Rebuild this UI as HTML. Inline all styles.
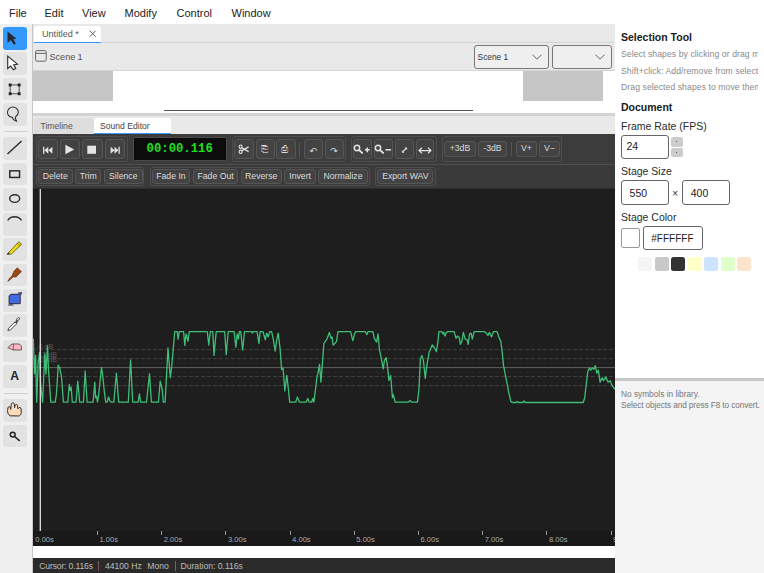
<!DOCTYPE html>
<html><head><meta charset="utf-8"><title>Untitled</title>
<style>
*{box-sizing:border-box;margin:0;padding:0}
html,body{width:764px;height:573px;overflow:hidden;background:#fff;font-family:"Liberation Sans",sans-serif;color:#222}
div,span{position:absolute;white-space:nowrap}
#menu{left:0;top:0;width:764px;height:24px;background:#fff}
#menu span{top:6px;font-size:11px;color:#222;line-height:14px}
#tools{left:0;top:24px;width:33px;height:549px;background:#f0f0f0;border-right:1px solid #c6c6c6}
.tb{left:3.3px;width:23.3px;height:22.8px;border-radius:3px;background:#e2e2e2}
.tb.sel{background:#3399ff}
.tb svg{position:absolute;left:0;top:0;width:23px;height:22.8px;overflow:visible}
.tsep{left:4px;width:23.5px;height:1px;background:#cfcfcf}
#tabbar{left:33px;top:24px;width:582px;height:18.5px;background:#e8e8e8;border-bottom:1px solid #d4d4d4}
#doctab{left:0.5px;top:1.5px;width:67px;height:17px;background:#fff;border-bottom:1.5px solid #3399ff;border-radius:3px 3px 0 0;font-size:9.1px;color:#555}
#scenebar{left:33px;top:42.5px;width:582px;height:28px;background:#e9e9e9;border-bottom:1px solid #d4d4d4}
.sel1{top:2.5px;height:23.5px;border:1px solid #777;border-radius:3px;background:#efefef;font-size:8.35px;color:#333;line-height:22.6px;padding-left:2.6px}
#stage{left:33px;top:70.5px;width:582px;height:42.5px;background:#fff}
#split1{left:33px;top:113px;width:582px;height:3.5px;background:#d2d2d2}
#tltabs{left:33px;top:116px;width:582px;height:18px;background:#e9e9e9}
.ttab{top:1.5px;height:16.5px;font-size:8.6px;line-height:16px;border-radius:3px 3px 0 0}
#se{left:33px;top:134px;width:582px;height:411.5px;background:#1e1e1e;overflow:hidden}
#tb1{left:0;top:0;width:582px;height:30.5px;background:#3c3c3c;border-bottom:1px solid #505050}
#tb2{left:0;top:30.5px;width:582px;height:24px;background:#3a3a3a;border-bottom:1px solid #2c2c2c}
.grp{border:1px solid #4e4e4e;border-radius:3px}
.btn{border:1px solid #565656;border-radius:3px;background:#434343;color:#ddd;font-size:8.7px;text-align:center}
.btn svg{position:absolute;left:50%;top:50%;margin:-10px 0 0 -10px;width:20px;height:20px;overflow:visible}
.btn b{font-family:"DejaVu Sans",sans-serif;font-weight:normal;position:relative;top:1px}
#ruler{left:0;top:397px;width:582px;height:14.5px;background:#191919}
#ruler span{top:4px;font-size:7.6px;color:#aaa;line-height:10px}
#ruler i{position:absolute;top:0;width:1px;height:3.5px;background:#9a9a9a}
#status{left:33px;top:557.5px;width:582px;height:15.5px;background:#2a2a2a;color:#bdbdbd;font-size:8.6px}
#status span{top:3px;line-height:10px}
#right{left:615px;top:24px;width:149px;height:549px;background:#fff;overflow:hidden}
#right .h{font-weight:bold;font-size:10.5px;color:#1a1a1a;left:6px;line-height:12px}
#right .d{letter-spacing:0.08px;font-size:8.65px;color:#8a8a8a;left:6px;line-height:10px;width:137px;overflow:hidden}
#right .l{font-size:10.5px;color:#2a2a2a;left:6px;line-height:12px}
.inp{border:1px solid #666;border-radius:3px;background:#fff;font-size:10.5px;color:#222}
.sw{top:233px;width:14.1px;height:14px;border-radius:2.5px}
#lib{left:0;top:354px;width:149px;height:195px;background:#f4f4f4;border-top:3.8px solid #c8c8c8}
#lib span{left:6px;font-size:8.4px;color:#777;line-height:10px}
svg text{font-family:"Liberation Sans",sans-serif}
</style></head><body>
<div id="menu">
<span style="left:9px">File</span><span style="left:44.5px">Edit</span><span style="left:82px">View</span><span style="left:124.5px">Modify</span><span style="left:176.5px">Control</span><span style="left:231.5px">Window</span>
</div>
<div id="tools">
<div class="tb sel" style="top:3.0px"><svg viewBox="0 0 23 22.8"><path d="M4.5 4.4V16L7.8 13L10.8 17.8L12.8 16.5L10.4 12.1L13.6 11.7Z" fill="#2b2b2b"/></svg></div>
<div class="tb" style="top:28.3px"><svg viewBox="0 0 23 22.8"><path d="M4.7 4.2V16.6L7.5 14.1L10.5 17.7L12.8 16.4L10.6 12.9L14.4 12.2Z" fill="#fff" stroke="#2a2a2a" stroke-width="1.1" stroke-linejoin="miter"/></svg></div>
<div class="tb" style="top:53.6px"><svg viewBox="0 0 23 22.8"><rect x="7.15" y="6.95" width="9" height="8.8" fill="none" stroke="#444" stroke-width="0.9"/><g fill="#222"><rect x="5.7" y="5.5" width="2.9" height="2.9"/><rect x="14.7" y="5.5" width="2.9" height="2.9"/><rect x="5.7" y="14.3" width="2.9" height="2.9"/><rect x="14.7" y="14.3" width="2.9" height="2.9"/></g></svg></div>
<div class="tb" style="top:78.9px"><svg viewBox="0 0 23 22.8"><path d="M9.2 14.3C6.3 13.9 4.5 11.8 4.5 9.3C4.5 6.3 6.9 4 9.9 4C12.9 4 15.3 6.3 15.3 9.2C15.3 10.9 14.4 12.4 13 13.3L12.2 15.3L13.7 18.2L10.4 16.6Z" fill="none" stroke="#2a2a2a" stroke-width="1.05" stroke-linejoin="round"/></svg></div>
<div class="tb" style="top:113.2px"><svg viewBox="0 0 23 22.8"><path d="M4.5 17L18.6 4.1" stroke="#2a2a2a" stroke-width="1.4" fill="none"/></svg></div>
<div class="tb" style="top:138.5px"><svg viewBox="0 0 23 22.8"><rect x="6.75" y="7.85" width="9.8" height="6.6" fill="none" stroke="#2a2a2a" stroke-width="1.5"/></svg></div>
<div class="tb" style="top:163.8px"><svg viewBox="0 0 23 22.8"><ellipse cx="11.7" cy="10.6" rx="5" ry="3.8" fill="none" stroke="#2a2a2a" stroke-width="1.4"/></svg></div>
<div class="tb" style="top:189.1px"><svg viewBox="0 0 23 22.8"><path d="M4.7 7.3C8 2.5 15.2 2.5 18.5 7.3" fill="none" stroke="#2a2a2a" stroke-width="1.4"/></svg></div>
<div class="tb" style="top:214.4px"><svg viewBox="0 0 23 22.8"><path d="M4 16.2L15.8 3.8L18.7 6.2L8.1 16.2Z" fill="#f5d90a" stroke="#55500a" stroke-width="0.8" stroke-linejoin="round"/><path d="M14.3 5.4L17.1 7.8" stroke="#55500a" stroke-width="0.7"/><path d="M4 16.2L6 14.1L6.5 16.2Z" fill="#333"/></svg></div>
<div class="tb" style="top:239.7px"><svg viewBox="0 0 23 22.8"><path d="M14.2 3.8L18.4 7.5L13.1 12.9L10 12.9L7.6 15.2L4.8 17.4L6.6 14.3L9 12L10.8 7.6Z" fill="#9c4a12" stroke="#4a2408" stroke-width="0.6" stroke-linejoin="round"/></svg></div>
<div class="tb" style="top:265.0px"><svg viewBox="0 0 23 22.8"><path d="M7.6 5.3H15.8L17.2 6.7V14.7H6.1V6.8Z" fill="#4169e1" stroke="#2a2a3a" stroke-width="1" stroke-linejoin="round"/><path d="M15.3 3.9L18.7 3.6L17.6 6.3Z" fill="#4169e1" stroke="#2a2a3a" stroke-width="0.8" stroke-linejoin="round"/><ellipse cx="7.8" cy="15.9" rx="3" ry="0.7" fill="#2a3350"/></svg></div>
<div class="tb" style="top:290.3px"><svg viewBox="0 0 23 22.8"><path d="M4.9 16.4L5.6 14.2L12.2 7.9L13.9 9.6L7.3 16Z" fill="#fff" stroke="#333" stroke-width="0.9" stroke-linejoin="round"/><path d="M12.6 8.9L14.6 6.4" stroke="#333" stroke-width="1.8"/><ellipse cx="15.2" cy="5" rx="1.7" ry="1.1" transform="rotate(-42 15.2 5)" fill="#fff" stroke="#333" stroke-width="0.8"/></svg></div>
<div class="tb" style="top:315.6px"><svg viewBox="0 0 23 22.8"><path d="M4.8 7.7L9 4H16.3L18.4 6.1V10H10.4Z" fill="#ffb6c1" stroke="#444" stroke-width="0.8" stroke-linejoin="round"/><path d="M10.4 4V10" stroke="#444" stroke-width="0.7"/></svg></div>
<div class="tb" style="top:340.9px"><svg viewBox="0 0 23 22.8"><text x="11.5" y="15.5" font-size="12.1" font-weight="bold" fill="#20222c" text-anchor="middle">A</text></svg></div>
<div class="tb" style="top:375.2px"><svg viewBox="0 0 23 22.8"><path d="M7.3 16.8C5.3 15.8 4.4 13.8 4.6 11.3L5 8.8C5.3 7.3 7.3 7.3 7.5 8.8L7.7 10.3L8.3 5.5C8.6 3.2 11.2 3.2 11.4 5.5L11.6 8.6L12 6.6C12.3 5 14.5 5.2 14.6 6.8L14.9 9.8L15.4 9.3C16 8 18 8.3 18 9.8L18.3 13.5C18.3 15.3 17.3 16.5 15.8 17Z" fill="#ffdab9" stroke="#2a2a2a" stroke-width="1" stroke-linejoin="round"/><path d="M10.5 9L9.5 14L13 11Z" fill="#e6e6e6"/></svg></div>
<div class="tb" style="top:400.5px"><svg viewBox="0 0 23 22.8"><circle cx="9.7" cy="9.6" r="2.4" fill="none" stroke="#222" stroke-width="1.5"/><path d="M11.6 11.5L16.7 15.8" stroke="#222" stroke-width="1.6"/></svg></div>
<div class="tsep" style="top:107px"></div><div class="tsep" style="top:369px"></div>

</div>
<div id="tabbar"><div id="doctab"><span style="left:8.5px;top:3.5px;line-height:10px">Untitled *</span>
<svg style="position:absolute;left:55px;top:4.7px;width:7.4px;height:7.4px" viewBox="0 0 8 8"><path d="M0.7 0.7L7.3 7.3M7.3 0.7L0.7 7.3" stroke="#555" stroke-width="1" fill="none"/></svg></div></div>
<div id="scenebar">
<svg style="position:absolute;left:2px;top:7.5px;width:12px;height:12px" viewBox="0 0 12 12"><rect x="0.6" y="0.6" width="10.6" height="10.6" rx="1.5" fill="none" stroke="#666" stroke-width="1"/><path d="M0.6 3.4H11.2" stroke="#666" stroke-width="1"/></svg>
<span style="left:16.6px;top:8px;font-size:9.2px;letter-spacing:-0.1px;color:#555;line-height:12px">Scene 1</span>
<div class="sel1" style="left:441px;width:75px">Scene 1<svg style="position:absolute;left:57px;top:8px;width:10px;height:6px" viewBox="0 0 10 6"><path d="M0.5 0.7L5 5.2L9.5 0.7" stroke="#555" stroke-width="0.9" fill="none"/></svg></div>
<div class="sel1" style="left:519px;width:60px"><svg style="position:absolute;left:42px;top:8px;width:10px;height:6px" viewBox="0 0 10 6"><path d="M0.5 0.7L5 5.2L9.5 0.7" stroke="#555" stroke-width="0.9" fill="none"/></svg></div>
</div>
<div id="stage">
<div style="left:0;top:0;width:79.7px;height:30px;background:#c6c6c6"></div>
<div style="left:490px;top:0;width:79.8px;height:30px;background:#c6c6c6"></div>
<div style="left:130.5px;top:39px;width:309.5px;height:1px;background:#555"></div>
</div>
<div id="split1"></div>
<div id="tltabs">
<div class="ttab" style="left:0.5px;width:60px;background:#dedede;color:#555"><span style="left:7px;top:0">Timeline</span></div>
<div class="ttab" style="left:60.5px;width:77px;background:#fff;color:#444;border-bottom:1.5px solid #3399ff"><span style="left:6.5px;top:0">Sound Editor</span></div>
</div>
<div id="se">
<div id="tb1">
<div class="grp" style="left:2.6px;top:2.2px;width:92.0px;height:26.2px"></div>
<div class="btn" style="left:4.5px;top:4.8px;width:20.4px;height:20.6px;line-height:18.6px"><svg viewBox="0 0 20 20"><path d="M5.7 7.7V14.8" stroke="#e4e4e4" stroke-width="1.3"/><path d="M10.3 7.7L6.4 11.25L10.3 14.8ZM14.4 7.7L10.5 11.25L14.4 14.8Z" fill="#e4e4e4"/></svg></div>
<div class="btn" style="left:26.9px;top:4.8px;width:20.4px;height:20.6px;line-height:18.6px"><svg viewBox="0 0 20 20"><path d="M5.4 5.7L14.2 10.4L5.4 15.2Z" fill="#e4e4e4"/></svg></div>
<div class="btn" style="left:49.3px;top:4.8px;width:20.4px;height:20.6px;line-height:18.6px"><svg viewBox="0 0 20 20"><rect x="5.3" y="6.7" width="8.7" height="8.1" fill="#e4e4e4"/></svg></div>
<div class="btn" style="left:71.7px;top:4.8px;width:20.4px;height:20.6px;line-height:18.6px"><svg viewBox="0 0 20 20"><path d="M14.1 7.7V14.8" stroke="#e4e4e4" stroke-width="1.3"/><path d="M5.6 7.7L9.5 11.25L5.6 14.8ZM9.5 7.7L13.4 11.25L9.5 14.8Z" fill="#e4e4e4"/></svg></div>
<div style="left:100.0px;top:2.6px;width:93.5px;height:24.4px;border:1px solid #4a4a4a;border-radius:2px;background:#0c0c0c"><span style="left:12.6px;top:5px;font-family:'Liberation Mono',monospace;font-weight:bold;font-size:12.25px;line-height:13px;color:#1fe01f">00:00.116</span></div>
<div class="grp" style="left:199.3px;top:2.2px;width:113.3px;height:26.2px"></div>
<div class="btn" style="left:201.3px;top:4.8px;width:19.4px;height:20.6px;line-height:18.6px"><svg viewBox="0 0 20 20"><ellipse cx="6.6" cy="7.7" rx="1.5" ry="1.7" fill="none" stroke="#e4e4e4" stroke-width="1.1"/><ellipse cx="6.6" cy="12.8" rx="1.5" ry="1.7" fill="none" stroke="#e4e4e4" stroke-width="1.1"/><path d="M7.8 8.8L14.6 12.6M7.8 11.7L14.6 7.9" stroke="#e4e4e4" stroke-width="1.3" fill="none"/></svg></div>
<div class="btn" style="left:222.5px;top:4.8px;width:19.4px;height:20.6px;line-height:18.6px"><b style="top:-0.3px;left:-1px">⎘</b></div>
<div class="btn" style="left:243.4px;top:4.8px;width:19.4px;height:20.6px;line-height:18.6px"><b style="top:-0.2px;left:-1.4px;font-size:9.2px">⎙</b></div>
<div class="btn" style="left:270.5px;top:4.8px;width:19.4px;height:20.6px;line-height:18.6px"><b style="top:1.8px;font-size:9.2px">↶</b></div>
<div class="btn" style="left:291.5px;top:4.8px;width:19.4px;height:20.6px;line-height:18.6px"><b style="top:1.8px;font-size:9.2px">↷</b></div>
<div style="left:266.3px;top:7.6px;width:1px;height:15px;background:#555"></div>
<div class="grp" style="left:317.8px;top:2.2px;width:85.8px;height:26.2px"></div>
<div class="btn" style="left:320.1px;top:4.8px;width:18.8px;height:20.6px;line-height:18.6px"><svg viewBox="0 0 20 20"><circle cx="5" cy="9" r="2.65" fill="none" stroke="#e4e4e4" stroke-width="1.5"/><path d="M7.1 11.1L10.2 13.9" stroke="#e4e4e4" stroke-width="1.9" stroke-linecap="round"/><path d="M12.9 10.8H17.7M15.3 8.4V13.2" stroke="#e4e4e4" stroke-width="1.5"/></svg></div>
<div class="btn" style="left:341.0px;top:4.8px;width:18.8px;height:20.6px;line-height:18.6px"><svg viewBox="0 0 20 20"><circle cx="5" cy="9" r="2.65" fill="none" stroke="#e4e4e4" stroke-width="1.5"/><path d="M7.1 11.1L10.2 13.9" stroke="#e4e4e4" stroke-width="1.9" stroke-linecap="round"/><path d="M12.4 10.8H18.1" stroke="#e4e4e4" stroke-width="1.5"/></svg></div>
<div class="btn" style="left:361.9px;top:4.8px;width:18.8px;height:20.6px;line-height:18.6px"><svg viewBox="0 0 20 20"><path d="M8.9 12.7L12.1 9.5" stroke="#e4e4e4" stroke-width="1.2"/><path d="M10.6 8.5H13.1V11ZM7.9 11.2V13.7H10.4Z" fill="#e4e4e4"/></svg></div>
<div class="btn" style="left:382.7px;top:4.8px;width:18.8px;height:20.6px;line-height:18.6px"><svg viewBox="0 0 20 20"><path d="M4.2 11.5H15.8M7 8.6L4.1 11.5L7 14.4M13 8.6L15.9 11.5L13 14.4" fill="none" stroke="#e4e4e4" stroke-width="1.25"/></svg></div>
<div class="grp" style="left:409.2px;top:2.2px;width:120.3px;height:26.2px"></div>
<div class="btn" style="left:411.3px;top:7.4px;width:31.4px;height:15.6px;line-height:13.6px">+3dB</div>
<div class="btn" style="left:444.7px;top:7.4px;width:29.5px;height:15.6px;line-height:13.6px">-3dB</div>
<div style="left:478.2px;top:8.0px;width:1px;height:13.5px;background:#555"></div>
<div class="btn" style="left:482.8px;top:7.4px;width:21.2px;height:15.6px;line-height:13.6px">V+</div>
<div class="btn" style="left:506.0px;top:7.4px;width:21.0px;height:15.6px;line-height:13.6px">V−</div>

</div>
<div id="tb2">
<div class="grp" style="left:2.9px;top:2.2px;width:108.6px;height:19.3px"></div>
<div class="btn" style="left:4.9px;top:4.3px;width:34.7px;height:15.2px;line-height:13.5px">Delete</div>
<div class="btn" style="left:42.2px;top:4.3px;width:26.1px;height:15.2px;line-height:13.5px">Trim</div>
<div class="btn" style="left:71.0px;top:4.3px;width:38.5px;height:15.2px;line-height:13.5px">Silence</div>
<div class="grp" style="left:116.5px;top:2.2px;width:220.5px;height:19.3px"></div>
<div class="btn" style="left:118.5px;top:4.3px;width:38.9px;height:15.2px;line-height:13.5px">Fade In</div>
<div class="btn" style="left:159.7px;top:4.3px;width:45.8px;height:15.2px;line-height:13.5px">Fade Out</div>
<div class="btn" style="left:207.5px;top:4.3px;width:41.5px;height:15.2px;line-height:13.5px">Reverse</div>
<div class="btn" style="left:250.9px;top:4.3px;width:32.4px;height:15.2px;line-height:13.5px">Invert</div>
<div class="btn" style="left:285.3px;top:4.3px;width:49.4px;height:15.2px;line-height:13.5px">Normalize</div>
<div class="grp" style="left:342.0px;top:2.2px;width:60.6px;height:19.3px"></div>
<div class="btn" style="left:344.3px;top:4.3px;width:56.0px;height:15.2px;line-height:13.5px">Export WAV</div>

</div>
<div id="ruler">
<span style="left:2.3px">0.00s</span><i style="left:64.0px"></i><span style="left:66.5px">1.00s</span><i style="left:128.2px"></i><span style="left:130.7px">2.00s</span><i style="left:192.4px"></i><span style="left:194.9px">3.00s</span><i style="left:256.6px"></i><span style="left:259.1px">4.00s</span><i style="left:320.8px"></i><span style="left:323.3px">5.00s</span><i style="left:385.0px"></i><span style="left:387.5px">6.00s</span><i style="left:449.2px"></i><span style="left:451.7px">7.00s</span><i style="left:513.4px"></i><span style="left:515.9px">8.00s</span><i style="left:577.6px"></i><span style="left:580.1px">9.00s</span>
</div>
</div>
<svg style="position:absolute;left:0;top:0;width:764px;height:573px;pointer-events:none" viewBox="0 0 764 573">
<defs><clipPath id="cv"><rect x="33" y="189" width="582" height="342"/></clipPath></defs>
<g clip-path="url(#cv)">
<g stroke="#414141" stroke-width="1" stroke-dasharray="4 2" fill="none">
<path d="M33 349.6H615M33 358.6H615M33 376.6H615M33 385.6H615"/>
<path d="M33 363.1H615M33 372.1H615" stroke="#2d2d2d"/>
</g>
<path d="M33 367.6H615" stroke="#626262" stroke-width="1" fill="none"/>
<g font-size="7" fill="#5a5a5a"><text x="36.4" y="348.5">-6 dB</text><text x="36.4" y="357.3">-12 dB</text><text x="36.4" y="361.8">-18 dB</text></g>
<polyline points="33.3,338.4 34.5,374.0 35.6,355.4 36.7,402.2 38.2,362.1 39.6,352.4 40.7,384.3 42.6,402.2 44.8,353.9 46.0,374.0 47.5,345.8 48.5,369.5 50.8,402.2 55.2,402.2 56.4,394.7 58.2,365.1 59.7,368.0 61.5,376.9 63.4,402.2 67.8,402.2 69.3,384.3 70.1,390.3 71.2,387.3 72.3,402.2 76.0,402.2 77.8,381.1 79.7,402.2 83.4,402.2 85.2,371.0 87.1,402.2 93.1,402.2 94.8,382.1 95.6,397.7 96.5,396.2 97.5,402.2 98.5,396.2 101.5,367.3 102.7,375.4 104.2,390.3 105.7,402.2 107.2,402.2 108.6,397.0 110.1,401.4 111.6,402.2 113.8,402.2 116.4,373.2 118.7,402.2 125.0,402.2 128.3,402.2 130.6,359.9 132.7,402.2 138.1,402.2 139.4,394.0 140.6,402.2 146.5,402.2 149.5,373.7 151.4,402.2 158.4,402.2 160.2,381.1 162.1,388.8 163.3,402.2 165.1,402.2 168.0,348.0 170.3,377.7 171.7,366.5 174.7,331.7 177.2,331.7 178.1,339.1 179.2,331.7 183.6,331.7 184.8,345.5 186.1,333.9 188.1,341.3 189.2,331.7 207.3,331.7 208.8,345.0 210.3,331.7 212.8,331.7 214.0,355.4 216.2,331.7 220.0,331.7 224.7,331.7 226.2,354.7 228.2,331.7 234.1,331.7 235.9,347.3 237.1,333.9 238.5,339.1 239.3,331.7 240.8,331.7 242.6,350.2 244.5,331.7 251.9,331.7 252.3,333.2 252.9,331.7 257.1,331.7 258.9,343.5 260.1,331.7 263.0,331.7 265.3,339.8 266.7,333.2 268.2,336.9 269.7,331.7 271.6,331.7 273.4,339.8 275.2,351.0 276.7,339.8 278.2,333.2 280.1,348.7 281.6,369.5 283.1,368.0 284.8,391.0 286.8,375.4 288.2,387.3 289.7,402.2 295.7,402.2 297.4,397.0 299.4,402.2 306.1,402.2 307.8,398.4 309.3,402.2 311.7,402.2 312.7,398.4 313.9,402.2 317.2,375.4 318.0,373.2 319.5,364.3 320.9,382.1 322.4,363.6 323.9,343.5 326.9,339.1 329.4,332.4 331.0,338.4 332.1,336.9 333.1,345.0 335.0,343.5 336.5,341.3 338.0,331.7 350.6,331.7 352.8,340.6 354.8,333.2 355.8,331.7 365.4,331.7 366.9,334.6 368.0,331.7 372.9,331.7 374.3,338.4 376.6,342.1 378.1,333.9 379.5,350.2 381.0,356.9 383.2,368.8 384.4,360.6 386.2,357.6 387.7,368.0 388.9,380.6 390.7,375.4 392.4,397.7 393.3,394.7 395.1,402.2 408.5,402.2 410.0,400.4 411.5,402.2 417.4,402.2 418.9,390.3 420.4,359.1 421.9,355.4 423.4,360.6 425.3,378.4 427.1,363.6 429.3,351.7 432.3,345.0 434.5,348.0 436.4,351.7 438.2,339.8 438.9,331.7 441.9,331.7 442.9,333.9 443.8,332.4 444.9,336.1 446.4,332.4 447.8,331.7 454.2,331.7 456.0,338.4 457.5,336.1 459.3,337.6 460.4,344.3 461.9,341.3 463.4,332.4 465.2,339.1 467.1,339.8 468.2,344.3 469.6,333.9 471.1,333.2 472.3,339.1 474.1,331.7 484.2,331.7 485.7,332.4 487.9,335.4 489.4,332.4 491.6,336.9 493.4,331.7 497.2,331.7 499.0,337.6 500.8,341.3 502.3,353.2 503.5,365.1 505.7,376.9 506.5,380.7 508.8,392.7 511.0,401.8 512.5,402.5 516.3,402.5 517.3,401.5 518.5,402.5 522.8,402.5 524.1,401.0 525.3,402.5 583.3,402.5 584.8,397.3 586.3,383.7 587.8,371.7 589.3,367.9 590.8,370.2 592.3,367.9 593.8,369.4 595.3,365.6 596.8,373.2 598.3,370.2 600.1,382.2 602.1,377.7 603.6,380.7 605.9,376.9 608.1,382.2 610.1,380.7 611.9,385.2 614.1,388.2 615.2,389.3" fill="none" stroke="#40be77" stroke-width="1.3" stroke-linejoin="round"/>
<path d="M40.3 189V531" stroke="#e2e2e2" stroke-width="1.3" fill="none"/>
</g>
</svg>
<div id="status">
<span style="left:6.3px;letter-spacing:-0.16px">Cursor: 0.116s</span><i style="position:absolute;left:65px;top:3px;width:1px;height:10px;background:#7a5555"></i>
<span style="left:72px">44100 Hz</span><span style="left:114.3px">Mono</span><i style="position:absolute;left:141.5px;top:3px;width:1px;height:10px;background:#666"></i>
<span style="left:147.5px">Duration: 0.116s</span>
</div>
<div id="right">
<div class="h" style="top:6.5px">Selection Tool</div>
<div class="d" style="top:25px">Select shapes by clicking or drag marquee</div>
<div class="d" style="top:41.8px">Shift+click: Add/remove from selection</div>
<div class="d" style="top:57.6px">Drag selected shapes to move them</div>
<div class="h" style="top:76.8px">Document</div>
<div class="l" style="top:96px">Frame Rate (FPS)</div>
<div class="inp" style="left:6px;top:111px;width:48px;height:23.5px"><span style="left:4.5px;top:4.3px;line-height:12px">24</span></div>
<div style="left:55.5px;top:113px;width:12.5px;height:9.5px;background:#ccc;border-radius:2px"><i style="position:absolute;left:5.7px;top:4.2px;width:1.2px;height:1.2px;background:#555"></i></div>
<div style="left:55.5px;top:123.8px;width:12.5px;height:9px;background:#ccc;border-radius:2px"><i style="position:absolute;left:5.7px;top:4px;width:1.2px;height:1.2px;background:#555"></i></div>
<div class="l" style="top:141px">Stage Size</div>
<div class="inp" style="left:6px;top:156.4px;width:48px;height:24.2px"><span style="left:7.6px;top:5.5px;line-height:12px">550</span></div>
<span style="left:57.2px;top:164.3px;font-size:10px;line-height:12px;color:#333">×</span>
<div class="inp" style="left:67.2px;top:156.4px;width:48px;height:24.2px"><span style="left:7.6px;top:5.5px;line-height:12px">400</span></div>
<div class="l" style="top:187px">Stage Color</div>
<div style="left:6px;top:204.2px;width:18.8px;height:19.8px;border:1px solid #999;border-radius:2px;background:#fff"></div>
<div class="inp" style="left:28.3px;top:202px;width:59.5px;height:23.7px"><span style="left:7px;top:6.2px;line-height:12px;font-size:10px">#FFFFFF</span></div>
<div class="sw" style="left:23.2px;background:#f5f5f5"></div>
<div class="sw" style="left:39.7px;background:#c8c8c8"></div>
<div class="sw" style="left:56.1px;background:#333"></div>
<div class="sw" style="left:72.6px;background:#ffffc6"></div>
<div class="sw" style="left:89.1px;background:#cce4ff"></div>
<div class="sw" style="left:105.5px;background:#dcffcc"></div>
<div class="sw" style="left:122px;background:#ffe4cc"></div>
<div id="lib"><span style="top:8px;font-size:8.3px">No symbols in library.</span><span style="top:19px;font-size:8.3px;letter-spacing:-0.12px">Select objects and press F8 to convert.</span></div>
</div>
</body></html>
